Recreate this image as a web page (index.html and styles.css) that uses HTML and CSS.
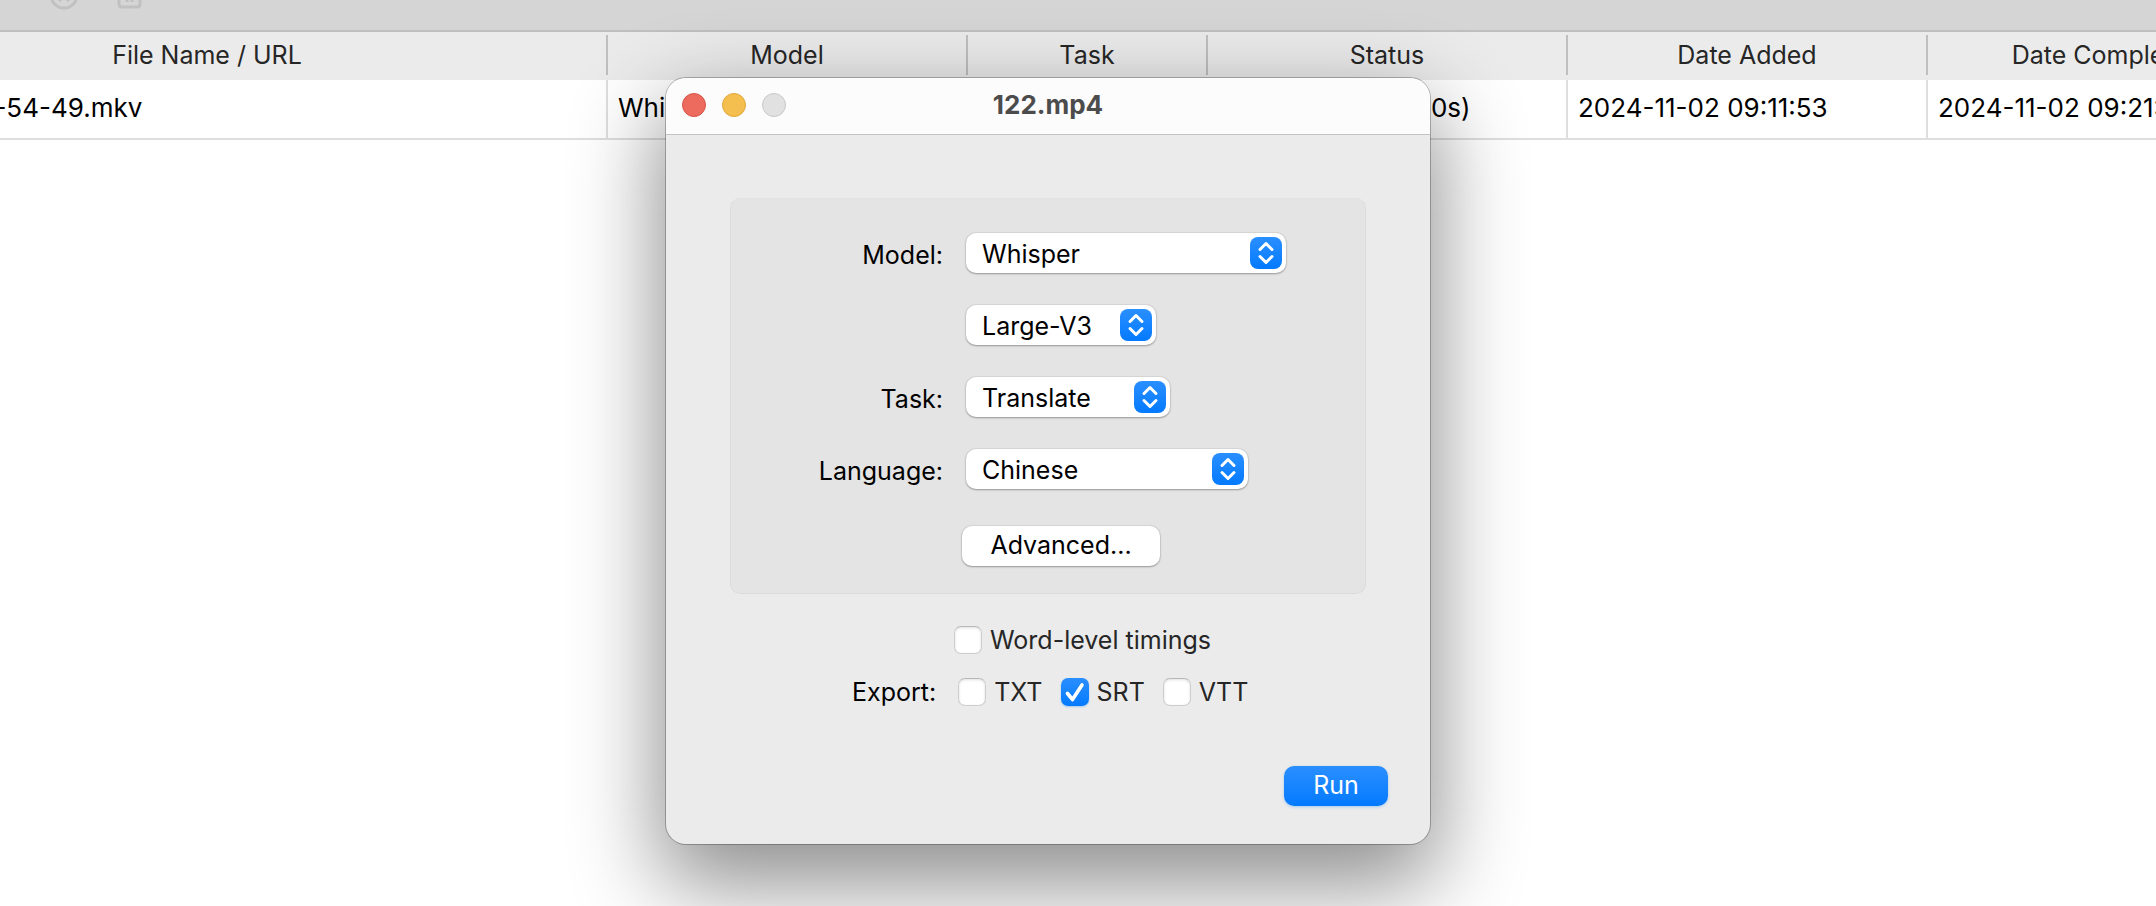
FILE: index.html
```html
<!DOCTYPE html>
<html lang="en">
<head>
    <meta charset="UTF-8">
    <meta name="viewport" content="width=device-width, initial-scale=1.0">
    <title>122.mp4</title>
    <link rel="stylesheet" href="styles.css">
</head>
<body>
    <div class="toolbar">
        <button class="tool-button" aria-label="Cancel" disabled>
            <svg width="32" height="12" viewBox="0 20 32 12">
                <circle cx="16" cy="15" r="13" />
                <path d="M11 21l5-5 5 5" />
            </svg>
        </button>
        <button class="tool-button" aria-label="Clear history" disabled>
            <svg width="32" height="12" viewBox="0 20 32 12">
                <path d="M5 6v18q0 3 3 3h15q3 0 3-3V6" />
                <path d="M13 8v14M18 8v14" />
            </svg>
        </button>
    </div>

    <div class="table-wrap">
        <table class="tasks">
            <thead>
                <tr>
                    <th class="col-file"><span>File Name / URL</span></th>
                    <th class="col-wide"><span>Model</span></th>
                    <th class="col-task"><span>Task</span></th>
                    <th class="col-wide"><span>Status</span></th>
                    <th class="col-wide"><span>Date Added</span></th>
                    <th class="col-wide"><span>Date Completed</span></th>
                </tr>
            </thead>
            <tbody>
                <tr>
                    <td>2024-11-01 09-54-49.mkv</td>
                    <td>Whisper</td>
                    <td>Translate</td>
                    <td>Completed (9m 20s)</td>
                    <td>2024-11-02 09:11:53</td>
                    <td>2024-11-02 09:21:13</td>
                </tr>
            </tbody>
        </table>
    </div>

    <form class="dialog">
        <div class="title-bar">
            <div class="lights">
                <button type="button" class="light close" aria-label="Close"></button>
                <button type="button" class="light minimize" aria-label="Minimize"></button>
                <button type="button" class="light" aria-label="Zoom" disabled></button>
            </div>
            <h1>122.mp4</h1>
        </div>

        <div class="dialog-body">
            <div class="group">
                <label for="model">Model:</label>
                <div class="select">
                    <select id="model" class="select-model">
                        <option>Whisper</option>
                    </select>
                    <svg viewBox="0 0 32 32"><path d="M10 12.5l6-6 6 6M10 19.5l6 6 6-6" /></svg>
                </div>

                <div class="select no-label">
                    <select class="select-size" aria-label="Model size">
                        <option>Large-V3</option>
                    </select>
                    <svg viewBox="0 0 32 32"><path d="M10 12.5l6-6 6 6M10 19.5l6 6 6-6" /></svg>
                </div>

                <label for="task">Task:</label>
                <div class="select">
                    <select id="task" class="select-task">
                        <option>Translate</option>
                    </select>
                    <svg viewBox="0 0 32 32"><path d="M10 12.5l6-6 6 6M10 19.5l6 6 6-6" /></svg>
                </div>

                <label for="language">Language:</label>
                <div class="select">
                    <select id="language" class="select-language">
                        <option>Chinese</option>
                    </select>
                    <svg viewBox="0 0 32 32"><path d="M10 12.5l6-6 6 6M10 19.5l6 6 6-6" /></svg>
                </div>

                <button type="button" class="button advanced">Advanced...</button>
            </div>

            <div class="options">
                <label class="check timings"><input type="checkbox">Word-level timings</label>
                <div class="export">
                    <span class="export-title">Export:</span>
                    <label class="check"><input type="checkbox">TXT</label>
                    <label class="check"><input type="checkbox" checked>SRT</label>
                    <label class="check"><input type="checkbox">VTT</label>
                </div>
            </div>

            <button type="submit" class="button run">Run</button>
        </div>
    </form>
</body>
</html>
```
FILE: styles.css
```css
* {
    box-sizing: border-box;
}
body {
    margin: 0;
    min-height: 100vh;
    overflow: hidden;
    background-color: #fff;
    color: #000;
    font-family: Inter, "Liberation Sans", sans-serif;
    font-size: 25px;
    line-height: 32px;
}
button, select, input {
    font: inherit;
    color: inherit;
    margin: 0;
}

/* Toolbar */
.toolbar {
    display: flex;
    gap: 34px;
    height: 32px;
    padding-left: 48px;
    background-color: #d5d5d5;
    border-bottom: 2px solid #bfbfbf;
}
.tool-button {
    display: flex;
    align-items: flex-start;
    padding: 0;
    border: none;
    background: none;
}
.tool-button svg {
    fill: none;
    stroke: #c1c1c1;
    stroke-width: 3;
}

/* Task table, scrolled a bit to the right */
.table-wrap {
    overflow: hidden;
}
.tasks {
    table-layout: fixed;
    width: 2480px;
    margin-left: -192px;
    border-collapse: separate;
    border-spacing: 0;
}
.col-file {
    width: 800px;
}
.col-wide {
    width: 360px;
}
.col-task {
    width: 240px;
}
.tasks th {
    height: 48px;
    padding: 3px 0 5px;
    background-color: #ebebeb;
    color: #262626;
    font-weight: 400;
}
.tasks th span {
    display: block;
    padding: 4px 0;
    border-right: 2px solid #bfbfbf;
}
.tasks td {
    height: 60px;
    padding: 0 10px 2px;
    border-right: 2px solid #dedede;
    border-bottom: 2px solid #dedede;
    font-size: 26px;
    white-space: nowrap;
}

/* Dialog window */
.dialog {
    position: absolute;
    top: 78px;
    left: 666px;
    width: 764px;
    border-radius: 20px;
    background-color: #ebebeb;
    box-shadow: 0 0 0 1px rgba(0, 0, 0, 0.25), 0 34px 88px 6px rgba(0, 0, 0, 0.45);
}
.title-bar {
    display: grid;
    grid-template-columns: 1fr auto 1fr;
    align-items: center;
    height: 57px;
    padding: 0 16px 2px;
    border-bottom: 1px solid #c4c4c4;
    border-radius: 20px 20px 0 0;
    background-color: #fcfcfc;
}
.title-bar h1 {
    margin: 0;
    color: #4c4c4c;
    font-size: 26px;
    font-weight: 700;
}
.lights {
    display: flex;
    gap: 16px;
}
.light {
    width: 24px;
    height: 24px;
    padding: 0;
    border: 1px solid #c8c8c8;
    border-radius: 50%;
    background-color: #e1e1e1;
}
.light.close {
    border-color: #d65549;
    background-color: #ec6a5e;
}
.light.minimize {
    border-color: #dea73c;
    background-color: #f5bf4f;
}
.dialog-body {
    display: flex;
    flex-direction: column;
    padding: 63px 42px 38px 64px;
}

/* Model and language settings */
.group {
    display: grid;
    grid-template-columns: 212px 1fr;
    column-gap: 23px;
    row-gap: 32px;
    align-items: center;
    margin-right: 22px;
    padding: 34px 0 27px;
    border: 1px solid #dcdcdc;
    border-top-color: #e2e2e2;
    border-radius: 10px;
    background-color: #e4e4e4;
}
.group label {
    padding-top: 4px;
    text-align: right;
}
.select {
    position: relative;
    justify-self: start;
    height: 40px;
}
.select select {
    appearance: none;
    height: 40px;
    padding: 1px 16px 0;
    border: none;
    border-radius: 10px;
    background-color: #fff;
    box-shadow: 0 0 1px 1px rgba(0, 0, 0, 0.06), 0 1px 2px rgba(0, 0, 0, 0.3);
}
.select svg {
    position: absolute;
    top: 4px;
    right: 4px;
    width: 32px;
    height: 32px;
    border-radius: 8px;
    background: linear-gradient(#2a8fff, #047aff);
    fill: none;
    stroke: #fff;
    stroke-width: 3;
    stroke-linecap: round;
    stroke-linejoin: round;
    pointer-events: none;
}
.select-model {
    width: 320px;
}
.select-size {
    width: 190px;
}
.select-task {
    width: 204px;
}
.select-language {
    width: 282px;
}
.no-label {
    grid-column: 2;
}
.button {
    height: 40px;
    padding: 0 28px 2px;
    border: none;
    border-radius: 10px;
    background-color: #fff;
    box-shadow: 0 0 1px 1px rgba(0, 0, 0, 0.06), 0 1px 2px rgba(0, 0, 0, 0.3);
}
.advanced {
    grid-column: 2;
    justify-self: start;
    width: 198px;
    margin: 5px 0 0 -4px;
}

/* Export options */
.options {
    display: flex;
    flex-direction: column;
    gap: 20px;
    padding-top: 30px;
}
.check {
    display: flex;
    align-items: center;
    gap: 8px;
    color: #262626;
}
.timings {
    margin-left: 224px;
}
.export {
    display: flex;
    gap: 18px;
    margin-left: 122px;
}
.export-title {
    margin-right: 4px;
}
.check input {
    appearance: none;
    width: 28px;
    height: 28px;
    border: 1px solid #cdcdcd;
    border-top-color: #b8b8b8;
    border-radius: 7px;
    background-color: #fff;
    box-shadow: inset 0 1px 3px rgba(0, 0, 0, 0.12);
}
.check input:checked {
    border: none;
    background: url("data:image/svg+xml,%3Csvg xmlns='http://www.w3.org/2000/svg' viewBox='0 0 28 28'%3E%3Cpath d='M6.5 15.5l5 6L21 7' fill='none' stroke='white' stroke-width='3.6' stroke-linecap='round' stroke-linejoin='round'/%3E%3C/svg%3E"), linear-gradient(#2a8fff, #047aff);
    box-shadow: 0 1px 2px rgba(0, 122, 255, 0.3);
}
.run {
    align-self: flex-end;
    width: 104px;
    margin-top: 58px;
    background: linear-gradient(#2a8fff, #047aff);
    box-shadow: 0 1px 3px rgba(0, 122, 255, 0.3);
    color: #fff;
}
```
